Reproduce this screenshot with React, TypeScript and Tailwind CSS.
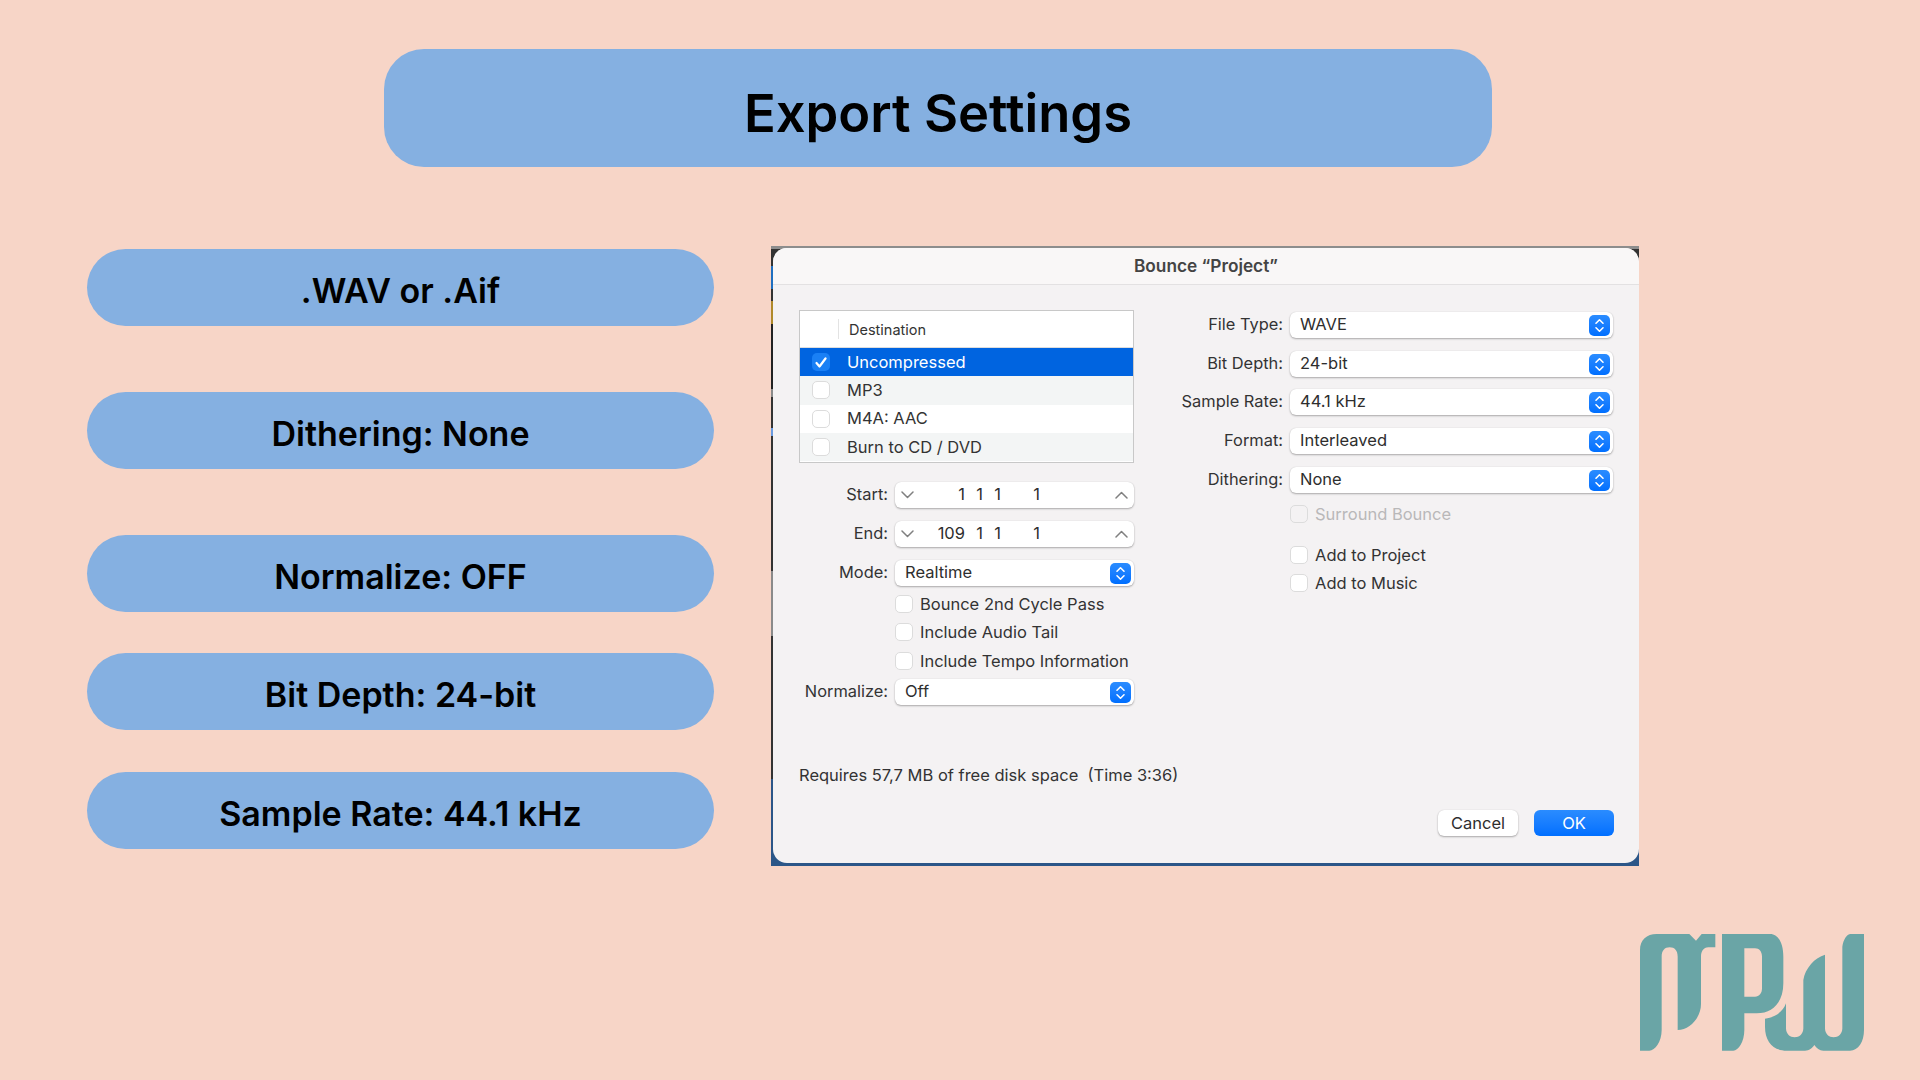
const ui = { fontFamily: "Inter, 'Liberation Sans', sans-serif" };

function Stepper() {
  return (
    <span className="flex h-[21px] w-[21px] items-center justify-center rounded-[5px] bg-gradient-to-b from-[#2a8cff] to-[#006fff]">
      <svg width="11" height="15" viewBox="0 0 11 15" fill="none" stroke="#fff" strokeWidth="1.6" strokeLinecap="round" strokeLinejoin="round">
        <path d="M2 5.2 5.5 1.8 9 5.2" />
        <path d="M2 9.8 5.5 13.2 9 9.8" />
      </svg>
    </span>
  );
}

function Select({ value, width }: { value: string; width: string }) {
  return (
    <div className={`flex h-[26px] items-center justify-between rounded-[6px] bg-white pl-[10px] pr-[3px] text-[16.5px] leading-[20px] text-[#2e2e2e] shadow-[0_1px_2px_rgba(0,0,0,0.3),0_0_1px_rgba(0,0,0,0.15)] ${width}`}>
      <span className="pb-[2px]">{value}</span>
      <Stepper />
    </div>
  );
}

function Check({ label, disabled, className }: { label: string; disabled?: boolean; className?: string }) {
  return (
    <div className={`flex h-[18px] items-center gap-[7px] text-[16.5px] leading-[20px] ${disabled ? "text-[#b9b8b9]" : "text-[#333]"} ${className ?? ""}`}>
      <span className={`h-[18px] w-[18px] rounded-[5px] border border-[#dcdcdc] ${disabled ? "bg-[#f4f2f3]" : "bg-white"}`} />
      <span>{label}</span>
    </div>
  );
}

function Chevron({ up }: { up?: boolean }) {
  return (
    <svg width="13" height="8" viewBox="0 0 13 8" fill="none" stroke="#808080" strokeWidth="1.5" strokeLinecap="round" strokeLinejoin="round">
      <path d={up ? "M1 7 6.5 1.5 12 7" : "M1 1 6.5 6.5 12 1"} />
    </svg>
  );
}

function Spinner({ bar }: { bar: string }) {
  return (
    <div className="flex h-[26px] w-[239px] items-center rounded-[6px] bg-white pl-[6px] pr-[6px] text-[16.5px] leading-[20px] text-[#2e2e2e] shadow-[0_1px_2px_rgba(0,0,0,0.3),0_0_1px_rgba(0,0,0,0.15)]">
      <Chevron />
      <span className="w-[51px] pb-[2px] text-right">{bar}</span>
      <span className="w-[18px] pb-[2px] text-right">1</span>
      <span className="w-[18px] pb-[2px] text-right">1</span>
      <span className="w-[39px] pb-[2px] text-right">1</span>
      <span className="ml-auto">
        <Chevron up />
      </span>
    </div>
  );
}

function Row({ label, labelWidth, className, children }: { label: string; labelWidth: string; className?: string; children: React.ReactNode }) {
  return (
    <div className={`flex h-[26px] items-center gap-[7px] ${className ?? ""}`}>
      <span className={`pb-[2px] text-right text-[16.4px] leading-[20px] text-[#333] ${labelWidth}`}>{label}</span>
      {children}
    </div>
  );
}

function TableRow({ label, checked, bg }: { label: string; checked?: boolean; bg: string }) {
  return (
    <div className={`flex h-[28.25px] items-center gap-[17px] pl-[12px] text-[16.5px] ${bg} ${checked ? "text-white" : "text-[#333]"}`}>
      {checked ? (
        <span className="flex h-[18px] w-[18px] items-center justify-center rounded-[5px] bg-[#1a80f5]">
          <svg width="12" height="11" viewBox="0 0 12 11" fill="none" stroke="#fff" strokeWidth="2.2" strokeLinecap="round" strokeLinejoin="round">
            <path d="M1.5 6 4.5 9.5 10.5 1.5" />
          </svg>
        </span>
      ) : (
        <span className="h-[18px] w-[18px] rounded-[5px] border border-[#dcdcdc] bg-white" />
      )}
      <span>{label}</span>
    </div>
  );
}

function Pill({ label, className }: { label: string; className?: string }) {
  return (
    <div className={`flex h-[77px] items-center justify-center rounded-full bg-[#85b0e1] pt-[5px] text-[34px] font-semibold text-black ${className ?? ""}`}>
      {label}
    </div>
  );
}

function Logo() {
  return (
    <svg width="224" height="117" viewBox="720 462 672 351" fill="#6aa5a6">
      <path d="M720 812V510C720 480 740 462 770 462H868L888 482 905 462H946V502H925C910 502 903 515 903 530V672C903 712 870 750 833 750V530C833 512 824 502 809 502S785 512 785 530V750C785 785 765 812 748 812Z" />
      <path fillRule="evenodd" d="M966 812V462H1110C1135 462 1150 490 1150 530V610C1150 665 1120 700 1070 700H1033V750C1033 785 1015 812 1000 812ZM1033 505V650H1065C1078 650 1086 640 1086 625V530C1086 515 1078 505 1065 505Z" />
      <path d="M1095 716C1125 712 1150 695 1158 670V745C1158 762 1170 772 1184 772S1210 762 1210 745V600C1215 565 1245 532 1275 524V745C1275 762 1287 772 1301 772S1327 762 1327 745V500C1330 480 1340 462 1352 462H1392V750C1392 785 1375 812 1350 812H1270C1258 812 1250 805 1243 795 1236 805 1228 812 1215 812H1160C1120 812 1095 785 1095 740Z" />
    </svg>
  );
}

export default function App() {
  return (
    <div className="h-[1080px] w-[1920px] overflow-hidden bg-[#f7d5c7] pt-[49px]" style={ui}>
      <div className="ml-[384px] flex h-[118px] w-[1108px] items-center justify-center rounded-[40px] bg-[#85b0e1] pt-[10px] text-[52.5px] font-semibold text-black">
        Export Settings
      </div>

      <div className="mt-[79px] flex">
        <div className="ml-[87px] w-[627px] pt-[3px]">
          <Pill label=".WAV or .Aif" />
          <Pill label="Dithering: None" className="mt-[66px]" />
          <Pill label="Normalize: OFF" className="mt-[66px]" />
          <Pill label="Bit Depth: 24-bit" className="mt-[41px]" />
          <Pill label="Sample Rate: 44.1 kHz" className="mt-[42px]" />
        </div>

        {/* dialog on top of the cropped desktop behind it */}
        <div className="ml-[57px] h-[620px] w-[868px] bg-[linear-gradient(180deg,#8d8d8d_0_3px,#333_3px_20px,#1f6fc0_20px_43px,#333_43px_55px,#b08a2a_55px_78px,#222_78px_143px,#8a8a8a_143px_151px,#333_151px_182px,#6a9be0_182px_190px,#333_190px_325px,#8a8a8a_325px_390px,#333_390px_533px,#2b5688_533px)] pb-[3px] pl-[2px] pt-[2px]">
          <div className="flex h-full flex-col overflow-hidden rounded-[14px] bg-[#f4f2f3]">
            <div className="flex h-[37px] items-center justify-center border-b border-[#e3e1e2] bg-[#f9f7f7] text-[17.25px] font-semibold text-[#444]">
              Bounce “Project”
            </div>

            <div className="flex h-[470px]">
              <div className="ml-[26px] w-[335px] pt-[25px]">
                <div className="h-[153px] border-[1.5px] border-[#c8c8c8] bg-white">
                  <div className="flex h-[37px] items-center border-b border-[#dddddd] pl-[38px]">
                    <span className="h-[20px] w-px bg-[#e3e3e3]" />
                    <span className="pl-[10px] pt-[1px] text-[14.5px] text-[#333]">Destination</span>
                  </div>
                  <TableRow label="Uncompressed" checked bg="bg-[#0064e0]" />
                  <TableRow label="MP3" bg="bg-[#f3f5f5]" />
                  <TableRow label="M4A: AAC" bg="bg-white" />
                  <TableRow label="Burn to CD / DVD" bg="bg-[#f3f5f5]" />
                </div>
                <Row label="Start:" labelWidth="w-[89px]" className="mt-[19px]">
                  <Spinner bar="1" />
                </Row>
                <Row label="End:" labelWidth="w-[89px]" className="mt-[13px]">
                  <Spinner bar="109" />
                </Row>
                <Row label="Mode:" labelWidth="w-[89px]" className="mt-[13px]">
                  <Select value="Realtime" width="w-[239px]" />
                </Row>
                <Check label="Bounce 2nd Cycle Pass" className="ml-[96px] mt-[9px]" />
                <Check label="Include Audio Tail" className="ml-[96px] mt-[10px]" />
                <Check label="Include Tempo Information" className="ml-[96px] mt-[11px]" />
                <Row label="Normalize:" labelWidth="w-[89px]" className="mt-[9px]">
                  <Select value="Off" width="w-[239px]" />
                </Row>
              </div>

              <div className="ml-[19px] w-[460px] pt-[27px]">
                <Row label="File Type:" labelWidth="w-[130px]">
                  <Select value="WAVE" width="w-[323px]" />
                </Row>
                <Row label="Bit Depth:" labelWidth="w-[130px]" className="mt-[13px]">
                  <Select value="24-bit" width="w-[323px]" />
                </Row>
                <Row label="Sample Rate:" labelWidth="w-[130px]" className="mt-[12px]">
                  <Select value="44.1 kHz" width="w-[323px]" />
                </Row>
                <Row label="Format:" labelWidth="w-[130px]" className="mt-[13px]">
                  <Select value="Interleaved" width="w-[323px]" />
                </Row>
                <Row label="Dithering:" labelWidth="w-[130px]" className="mt-[13px]">
                  <Select value="None" width="w-[323px]" />
                </Row>
                <Check label="Surround Bounce" disabled className="ml-[137px] mt-[12px]" />
                <Check label="Add to Project" className="ml-[137px] mt-[23px]" />
                <Check label="Add to Music" className="ml-[137px] mt-[10px]" />
              </div>
            </div>

            <div className="ml-[26px] mt-[10px] flex h-[20px] items-center whitespace-pre text-[16.5px] text-[#333]">
              Requires 57,7 MB of free disk space  (Time 3:36)
            </div>

            <div className="mr-[25px] mt-[25px] flex justify-end gap-[16px]">
              <div className="flex h-[26px] w-[80px] items-center justify-center rounded-[6px] bg-white text-[16.5px] text-[#2e2e2e] shadow-[0_1px_2px_rgba(0,0,0,0.3),0_0_1px_rgba(0,0,0,0.15)]">
                Cancel
              </div>
              <div className="flex h-[26px] w-[80px] items-center justify-center rounded-[6px] bg-gradient-to-b from-[#2a8cff] to-[#006fff] text-[16.5px] text-white">
                OK
              </div>
            </div>
          </div>
        </div>
      </div>

      <div className="mt-[68px] flex justify-end pr-[56px]">
        <Logo />
      </div>
    </div>
  );
}
